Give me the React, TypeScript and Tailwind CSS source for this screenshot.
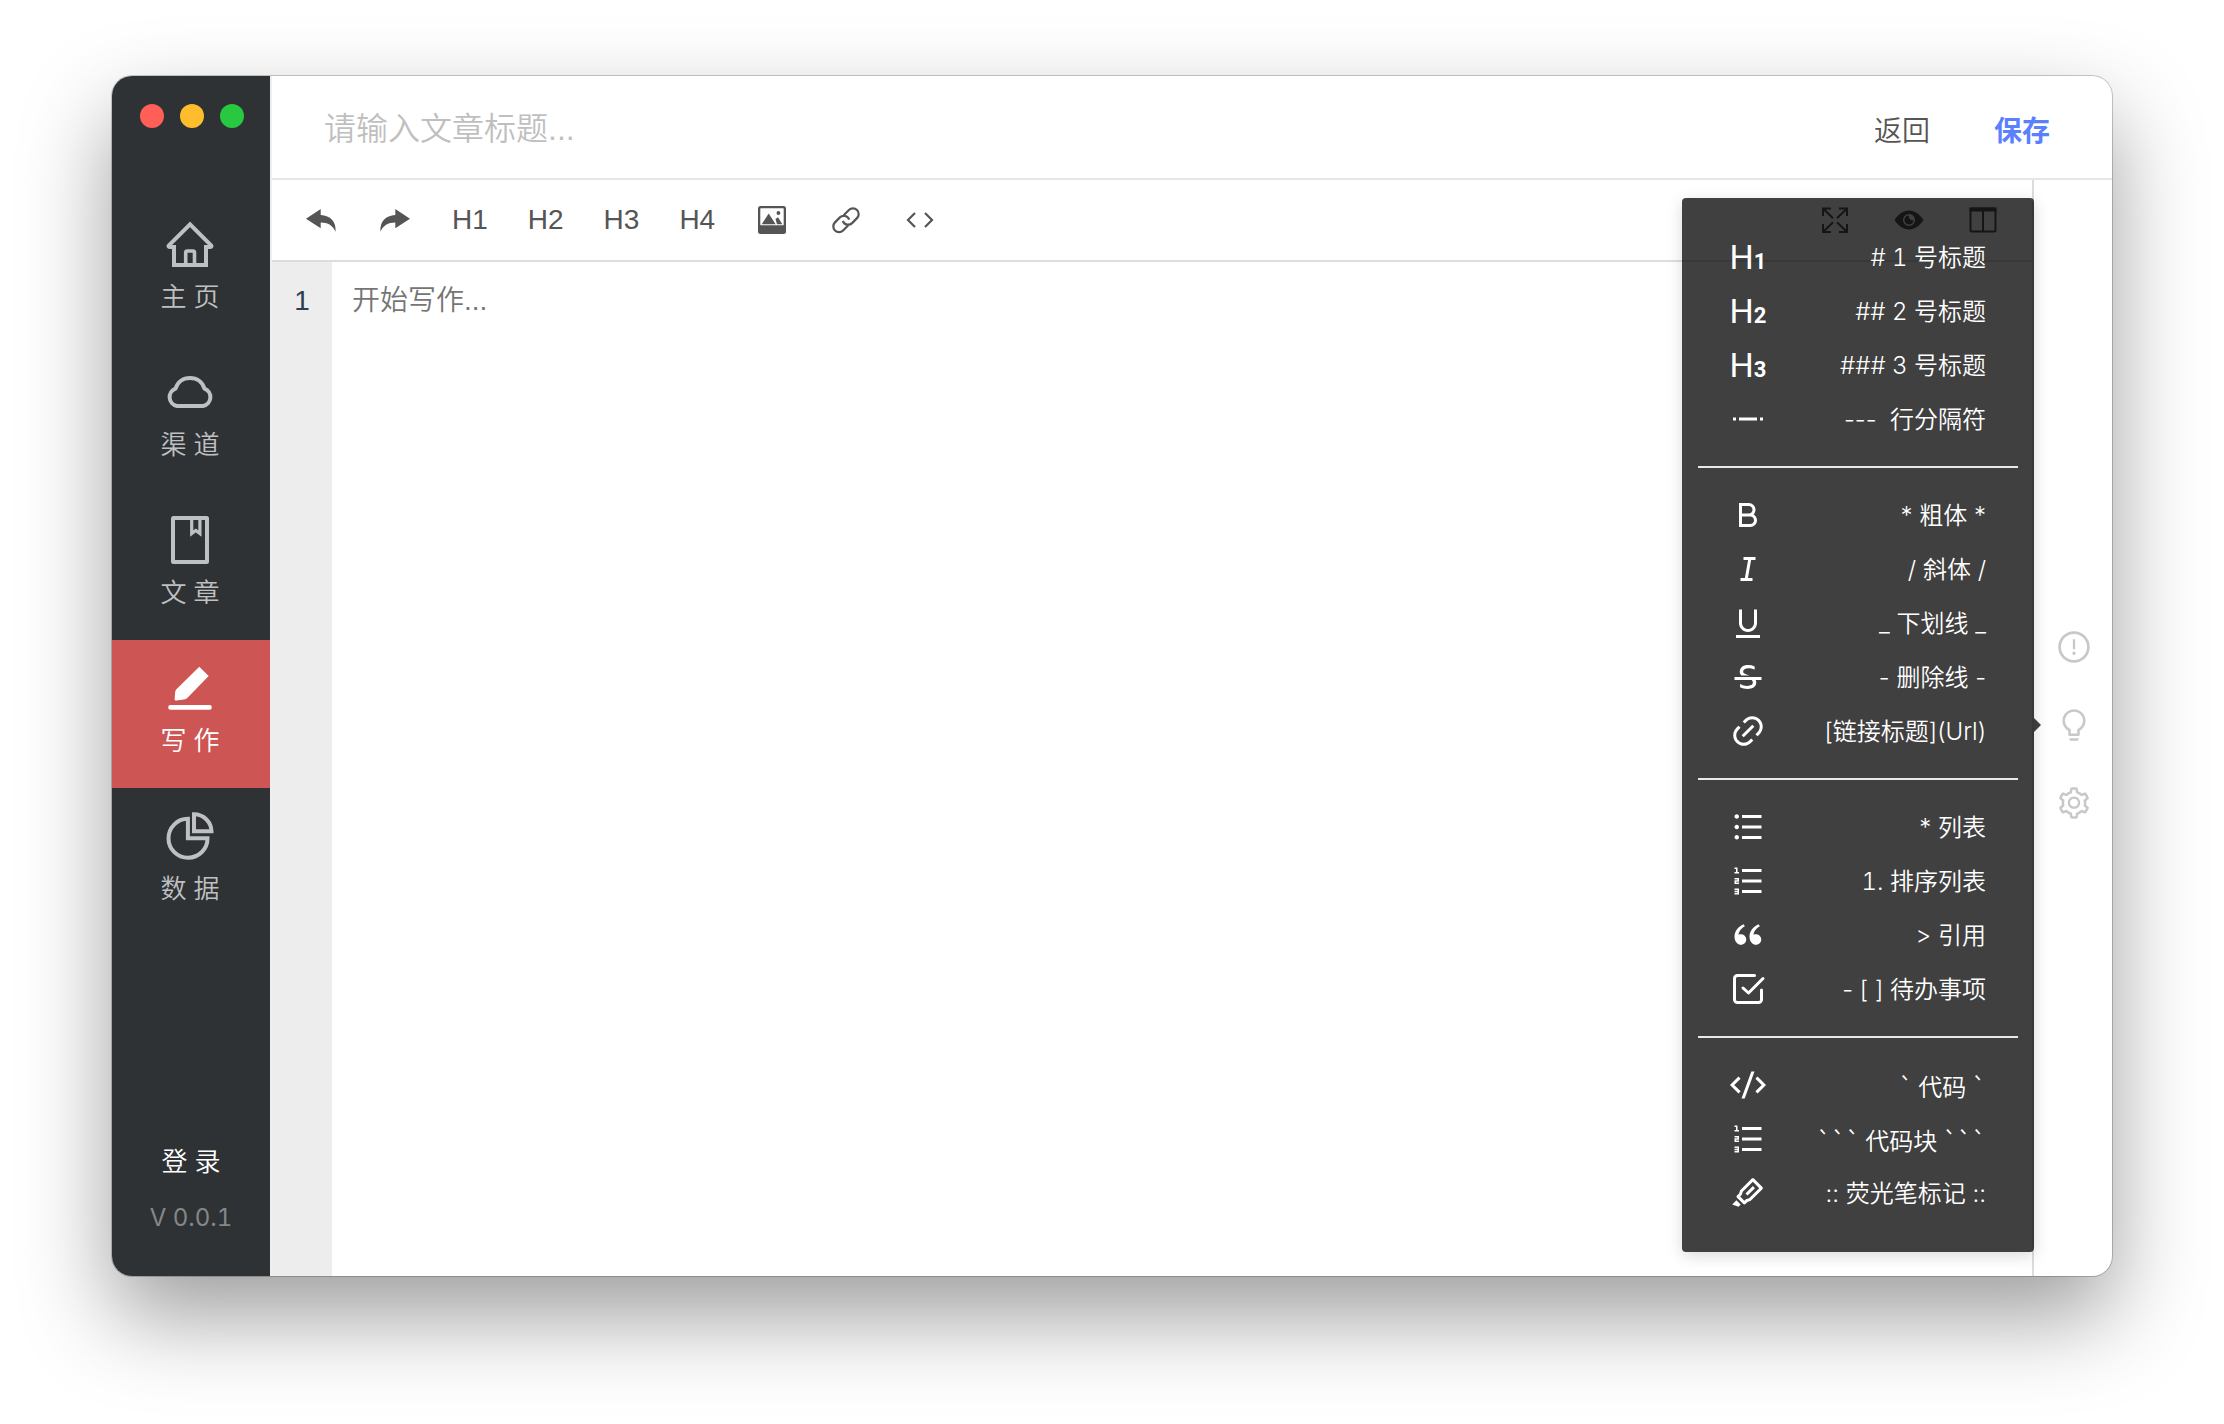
import React from "react";
import { AiOutlineBulb, AiOutlineExclamationCircle, AiOutlineSetting } from "react-icons/ai";
import {
  RiBold,
  RiCodeSSlashLine,
  RiDoubleQuotesL,
  RiItalic,
  RiLink,
  RiListOrdered,
  RiListUnordered,
  RiMarkPenLine,
  RiSeparator,
  RiStrikethrough,
  RiUnderline,
} from "react-icons/ri";

type IconProps = { className?: string };

/* ---------- sidebar icons (48 x 48) ---------- */

function HomeIcon() {
  return (
    <svg viewBox="0 0 48 48" className="size-12" fill="none" stroke="currentColor" strokeWidth="4" aria-hidden>
      <path d="M24 4.4 2.9 25.4c-.7.7-.3 1.6.7 1.6H8v18h32V27h4.400c1 0 1.400-.9.7-1.600Z" strokeLinejoin="miter" />
      <path d="M19.700 45V32.600q0-1.600 1.600-1.600h5.600q1.600 0 1.600 1.600V45" strokeWidth="3.600" />
    </svg>
  );
}

function CloudIcon() {
  return (
    <svg viewBox="0 0 48 48" className="size-12" fill="none" stroke="currentColor" strokeWidth="4" aria-hidden>
      <path d="M11 38h26a9 9 0 0 0 1.500-17.300C36.500 14 31 10 24 10S11.500 14 9.500 20.700A9 9 0 0 0 11 38Z" strokeLinejoin="round" />
    </svg>
  );
}

function ArticleIcon() {
  return (
    <svg viewBox="0 0 48 48" className="size-12" fill="none" stroke="currentColor" strokeWidth="4" aria-hidden>
      <rect x="7" y="2" width="34" height="44" rx=".5" strokeLinejoin="round" />
      <path d="M25.700 2v15.500l4.100-3 4.100 3V2" strokeWidth="3.200" />
    </svg>
  );
}

function WriteIcon() {
  return (
    <svg viewBox="0 0 48 48" className="size-12" fill="currentColor" aria-hidden>
      <path d="M33.300 2.700 42.700 12 21.500 33.800c-1 1-2 1.400-3.500 1.600l-7.400 1.100c-1.300.2-2-.3-2-1.500l.5-6c.1-1.600.5-2.800 1.600-3.900Z" />
      <rect x="2.300" y="41" width="43.400" height="4.700" rx="2" />
    </svg>
  );
}

function DataIcon() {
  return (
    <svg viewBox="0 0 48 48" className="size-12" fill="none" stroke="currentColor" strokeWidth="4" aria-hidden>
      <path d="M21.900 6.800a19.500 19.500 0 1 0 19.600 19.400H21.900Z" />
      <path d="M28 2.300v17h17.500A17.500 17.500 0 0 0 28 2.300Z" />
    </svg>
  );
}

/* ---------- toolbar icons (34 x 34) ---------- */

function UndoIcon({ className = "" }: IconProps) {
  return (
    <svg viewBox="0 0 34 34" className={`size-[34px] ${className}`} fill="currentColor" aria-hidden>
      <path d="m2 15.700 14.700-9.700v6.100C26.500 12.800 32.200 18.500 31.600 28.700c-2.600-6.200-7.600-9.200-14.900-9.300v5.900Z" />
    </svg>
  );
}

function ImageIcon() {
  return (
    <svg viewBox="0 0 34 34" className="size-[34px]" aria-hidden>
      <rect x="3" y="3" width="28" height="28" rx="2.500" fill="currentColor" />
      <rect x="5.300" y="5.200" width="23.400" height="17" rx=".6" fill="#fff" />
      <path d="M6.700 21.200 13.700 10.500l6.900 10.700ZM22 21.200l-1.500-5.200 2.500-1.700 4.300 6.900Z" fill="currentColor" />
      <circle cx="23.400" cy="10" r="1.900" fill="currentColor" />
    </svg>
  );
}

function ChainIcon() {
  return (
    <svg viewBox="0 0 34 34" className="size-[34px]" fill="none" stroke="currentColor" strokeWidth="2.200" aria-hidden>
      <path d="m14.700 12.200 5.200-5.200a5.700 5.700 0 0 1 8.100 8.100l-4.900 5a5.700 5.700 0 0 1-9.300-2.100" />
      <path d="m19.300 22.300-5.200 5.200a5.700 5.700 0 0 1-8.100-8.100l4.900-5a5.700 5.700 0 0 1 9.300 2.300" />
    </svg>
  );
}

function AngleIcon() {
  return (
    <svg viewBox="0 0 34 34" className="size-[34px]" fill="none" stroke="currentColor" strokeWidth="2.200" aria-hidden>
      <path d="m12 10-7 7 7 7M22 10l7 7-7 7" />
    </svg>
  );
}

function ExpandIcon() {
  return (
    <svg viewBox="0 0 34 34" className="size-[34px]" fill="none" stroke="currentColor" strokeWidth="2" aria-hidden>
      <path d="M5 13V5.500h8M5.500 6 15 15.200M21 5.500h8V13M28.500 6 19 15.200M5 21v8h8M5.500 28.500 15 19.300M21 29h8v-8M28.500 28.500 19 19.300" />
    </svg>
  );
}

function EyeIcon() {
  return (
    <svg viewBox="0 0 34 34" className="size-[34px]" fillRule="evenodd" fill="currentColor" aria-hidden>
      <path d="M2.500 17C6.500 11 11.500 7.500 17 7.500S27.500 11 31.500 17c-4 6-9 9.500-14.500 9.500S6.500 23 2.500 17ZM17 11a6 6 0 1 0 0 12 6 6 0 0 0 0-12Z" />
      <path d="M17 12.400a4.600 4.600 0 1 0 4.600 4.600c-2.600.9-5-1.300-4.600-4.600Z" />
    </svg>
  );
}

function SplitIcon() {
  return (
    <svg viewBox="0 0 34 34" className="size-[34px]" fill="none" stroke="currentColor" strokeWidth="2" aria-hidden>
      <rect x="4.500" y="5.500" width="25" height="23" rx="1" />
      <path d="M17 6v22" />
      <path d="M3.500 6.500h27" strokeWidth="4" />
    </svg>
  );
}

function TodoIcon() {
  return (
    <svg viewBox="0 0 36 36" className="size-9" fill="none" stroke="currentColor" strokeWidth="3" strokeLinecap="round" strokeLinejoin="round" aria-hidden>
      <path d="M24.500 4.500H7.500a3 3 0 0 0-3 3v21a3 3 0 0 0 3 3h21a3 3 0 0 0 3-3V19" />
      <path d="m13 17 5.500 5L33 7.500" />
    </svg>
  );
}

function Heading({ level }: { level: number }) {
  return (
    <span className="flex items-baseline pt-1 font-['Roboto'] text-[34px] leading-9">
      H<span className="text-[22px] font-bold">{level}</span>
    </span>
  );
}

/* ---------- data ---------- */

const nav = [
  { label: "主 页", icon: <HomeIcon /> },
  { label: "渠 道", icon: <CloudIcon /> },
  { label: "文 章", icon: <ArticleIcon /> },
  { label: "写 作", icon: <WriteIcon />, active: true },
  { label: "数 据", icon: <DataIcon /> },
];

const fonts = {
  text: "font-['Inter','Noto_Sans_CJK_SC',sans-serif]",
  digits: "font-['Inter','Noto_Sans_CJK_SC',sans-serif] tabular-nums",
  code: "font-['Noto_Sans_CJK_SC',sans-serif]",
};

type Row = { icon: React.ReactNode; text: string; font?: keyof typeof fonts };

const groups: Row[][] = [
  [
    { icon: <Heading level={1} />, text: "# 1 号标题", font: "digits" },
    { icon: <Heading level={2} />, text: "## 2 号标题", font: "digits" },
    { icon: <Heading level={3} />, text: "### 3 号标题", font: "digits" },
    { icon: <RiSeparator />, text: "---  行分隔符" },
  ],
  [
    { icon: <RiBold />, text: "* 粗体 *" },
    { icon: <RiItalic />, text: "/ 斜体 /" },
    { icon: <RiUnderline />, text: "_ 下划线 _" },
    { icon: <RiStrikethrough />, text: "- 删除线 -" },
    { icon: <RiLink />, text: "[链接标题](Url)" },
  ],
  [
    { icon: <RiListUnordered />, text: "* 列表" },
    { icon: <RiListOrdered />, text: "1. 排序列表", font: "digits" },
    { icon: <RiDoubleQuotesL />, text: "> 引用" },
    { icon: <TodoIcon />, text: "- [ ] 待办事项" },
  ],
  [
    { icon: <RiCodeSSlashLine />, text: "` 代码 `", font: "code" },
    { icon: <RiListOrdered />, text: "``` 代码块 ```", font: "code" },
    { icon: <RiMarkPenLine />, text: ":: 荧光笔标记 ::" },
  ],
];

/* ---------- parts ---------- */

function Sidebar() {
  return (
    <aside className="flex w-[158px] shrink-0 flex-col bg-[#2e3235]">
      <div className="flex h-[120px] shrink-0 gap-4 pt-7 pl-7">
        <button aria-label="关闭" className="size-6 rounded-full bg-[#ff5f57]" />
        <button aria-label="最小化" className="size-6 rounded-full bg-[#ffbd2e]" />
        <button aria-label="全屏" className="size-6 rounded-full bg-[#28c940]" />
      </div>
      <nav className="flex flex-col">
        {nav.map((item) => (
          <a
            key={item.label}
            href="#"
            className={`flex h-[148px] flex-col items-center pt-6 pr-0.5 ${
              item.active ? "bg-[#cd5554] text-white" : "text-[#bfc0c2]"
            }`}
          >
            {item.icon}
            <span className="mt-[11px] text-[26px] leading-9 font-[350]">{item.label}</span>
          </a>
        ))}
      </nav>
      <div className="mt-auto flex flex-col items-center gap-5 pb-10">
        <button className="text-[26px] leading-9 font-[350] text-white">登 录</button>
        <span className="font-['Inter'] text-2xl leading-9 text-[#868789] tabular-nums">V 0.0.1</span>
      </div>
    </aside>
  );
}

function Toolbar() {
  return (
    <div className="flex h-[82px] shrink-0 items-center justify-between border-b-2 border-[#ddd] px-8 text-[28px] leading-9 text-[#555]">
      <div className="flex items-center gap-10">
        <button aria-label="撤销"><UndoIcon /></button>
        <button aria-label="重做"><UndoIcon className="-scale-x-100" /></button>
        <button>H1</button>
        <button>H2</button>
        <button>H3</button>
        <button>H4</button>
        <button aria-label="图片"><ImageIcon /></button>
        <button aria-label="链接"><ChainIcon /></button>
        <button aria-label="代码"><AngleIcon /></button>
      </div>
      <div className="flex items-center gap-10">
        <button aria-label="全屏编辑"><ExpandIcon /></button>
        <button aria-label="预览"><EyeIcon /></button>
        <button aria-label="分栏"><SplitIcon /></button>
      </div>
    </div>
  );
}

function SyntaxPopover() {
  return (
    <div
      role="tooltip"
      className="absolute top-1/2 right-full w-[352px] -translate-y-1/2 rounded-sm bg-black/75 px-4 py-8 text-2xl leading-9 text-white shadow-[0_4px_16px_rgba(0,0,0,0.15)]"
    >
      {groups.map((rows, i) => (
        <React.Fragment key={i}>
          {i > 0 && <hr className="my-5 border-t-2 border-[#e8e8e8]" />}
          <ul>
            {rows.map((row) => (
              <li key={row.text} className="flex h-[54px] items-center justify-between px-8">
                <span className="flex w-9 justify-center text-4xl">{row.icon}</span>
                <span className={`pt-0.5 font-[350] whitespace-pre ${fonts[row.font ?? "text"]}`}>{row.text}</span>
              </li>
            ))}
          </ul>
        </React.Fragment>
      ))}
      <span className="absolute top-1/2 left-full h-3.5 w-[7px] -translate-y-1/2 bg-black/75 [clip-path:polygon(0_0,100%_50%,0_100%)]" />
    </div>
  );
}

function Rail() {
  return (
    <div className="flex w-20 shrink-0 flex-col justify-center gap-[42px] border-l-2 border-[#ddd] pb-1.5 text-4xl text-[#c8c8c8]">
      <button aria-label="问题" className="flex justify-center pl-0.5"><AiOutlineExclamationCircle /></button>
      <div className="relative">
        <button aria-label="语法提示" className="flex w-full justify-center pl-0.5"><AiOutlineBulb /></button>
        <SyntaxPopover />
      </div>
      <button aria-label="设置" className="flex justify-center pl-0.5"><AiOutlineSetting /></button>
    </div>
  );
}

export default function App() {
  return (
    <div className="flex min-h-screen bg-white px-28 pt-[76px] pb-[148px] font-['Liberation_Sans','Noto_Sans_CJK_SC',sans-serif]">
      <div className="flex flex-1 overflow-hidden rounded-[20px] bg-white shadow-[0_0_0_1px_rgba(0,0,0,0.2),0_40px_90px_rgba(0,0,0,0.39)]">
        <Sidebar />
        <main className="flex min-w-0 flex-1 flex-col border-l-2 border-[#eee]">
          <header className="flex h-[104px] shrink-0 items-center gap-16 border-b-2 border-[#e6e6e6] pt-1 pr-[62px] pl-[52px] text-[28px]">
            <input
              aria-label="文章标题"
              placeholder="请输入文章标题..."
              className="min-w-0 flex-1 text-[32px] leading-10 font-[350] outline-none placeholder:text-[#bfbfbf]"
            />
            <button className="pt-1.5 font-[350] text-[#555]">返回</button>
            <button className="pt-1.5 font-bold text-[#5a7fff]">保存</button>
          </header>
          <div className="flex min-h-0 flex-1">
            <div className="flex min-w-0 flex-1 flex-col">
              <Toolbar />
              <div className="flex flex-1 text-[28px] leading-10">
                <div className="w-[60px] bg-[#ededed] pt-[19px] text-center text-[#2c3e50]">1</div>
                <textarea
                  aria-label="正文"
                  placeholder="开始写作..."
                  className="flex-1 resize-none px-5 pt-[19px] font-[350] outline-none placeholder:text-[#757575]"
                />
              </div>
            </div>
            <Rail />
          </div>
        </main>
      </div>
    </div>
  );
}
